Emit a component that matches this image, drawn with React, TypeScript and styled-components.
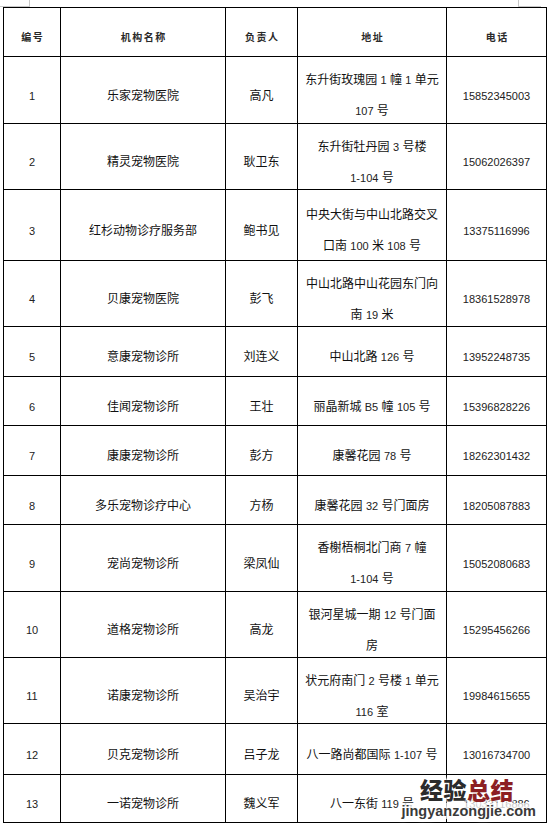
import styled, { createGlobalStyle } from "styled-components";

const GlobalStyle = createGlobalStyle`
  html, body {
    margin: 0;
    padding: 0;
    background: #fff;
  }
`;

type Row = {
  no: string;
  name: string;
  person: string;
  addr: string[];
  phone: string;
  h: number;
};

const rows: Row[] = [
  { no: "1", name: "乐家宠物医院", person: "高凡", addr: ["东升街玫瑰园 1 幢 1 单元", "107 号"], phone: "15852345003", h: 67 },
  { no: "2", name: "精灵宠物医院", person: "耿卫东", addr: ["东升街牡丹园 3 号楼", "1-104 号"], phone: "15062026397", h: 66 },
  { no: "3", name: "红杉动物诊疗服务部", person: "鲍书见", addr: ["中央大街与中山北路交叉", "口南 100 米 108 号"], phone: "13375116996", h: 71 },
  { no: "4", name: "贝康宠物医院", person: "彭飞", addr: ["中山北路中山花园东门向", "南 19 米"], phone: "18361528978", h: 66 },
  { no: "5", name: "意康宠物诊所", person: "刘连义", addr: ["中山北路 126 号"], phone: "13952248735", h: 50 },
  { no: "6", name: "佳闻宠物诊所", person: "王壮", addr: ["丽晶新城 B5 幢 105 号"], phone: "15396828226", h: 49 },
  { no: "7", name: "康康宠物诊所", person: "彭方", addr: ["康馨花园 78 号"], phone: "18262301432", h: 50 },
  { no: "8", name: "多乐宠物诊疗中心", person: "方杨", addr: ["康馨花园 32 号门面房"], phone: "18205087883", h: 49 },
  { no: "9", name: "宠尚宠物诊所", person: "梁凤仙", addr: ["香榭梧桐北门商 7 幢", "1-104 号"], phone: "15052080683", h: 67 },
  { no: "10", name: "道格宠物诊所", person: "高龙", addr: ["银河星城一期 12 号门面", "房"], phone: "15295456266", h: 66 },
  { no: "11", name: "诺康宠物诊所", person: "吴治宇", addr: ["状元府南门 2 号楼 1 单元", "116 室"], phone: "19984615655", h: 66 },
  { no: "12", name: "贝克宠物诊所", person: "吕子龙", addr: ["八一路尚都国际 1-107 号"], phone: "13016734700", h: 51 },
  { no: "13", name: "一诺宠物诊所", person: "魏义军", addr: ["八一东街 119 号"], phone: "13033116886", h: 48 },
];

const heads = ["编号", "机构名称", "负责人", "地址", "电话"];
const widths = [57, 165, 72, 149, 100];

// latin runs use a smaller, narrower size like the original document
function rich(text: string) {
  return text.split(/([A-Za-z0-9-]+)/).map((part, i) =>
    /^[A-Za-z0-9-]+$/.test(part) ? <Num key={i}>{part}</Num> : part
  );
}

function App() {
  return (
    <Page>
      <GlobalStyle />
      <Mark $side="left" />
      <Mark $side="right" />
      <Sheet>
        <colgroup>
          {widths.map((w, i) => (
            <col key={i} style={{ width: w }} />
          ))}
        </colgroup>
        <thead>
          <TableRow $h={49}>
            {heads.map((h) => (
              <HeadCell key={h}>
                <Line>{h}</Line>
              </HeadCell>
            ))}
          </TableRow>
        </thead>
        <tbody>
          {rows.map((r) => (
            <TableRow key={r.no} $h={r.h}>
              <Cell>
                <Line>
                  <Num>{r.no}</Num>
                </Line>
              </Cell>
              <Cell>
                <Line>{r.name}</Line>
              </Cell>
              <Cell>
                <Line>{r.person}</Line>
              </Cell>
              <Cell>
                {r.addr.map((line, i) => (
                  <Line key={i}>{rich(line)}</Line>
                ))}
              </Cell>
              <Cell>
                <Line>
                  <Num>{r.phone}</Num>
                </Line>
              </Cell>
            </TableRow>
          ))}
        </tbody>
      </Sheet>
      <Watermark>
        <Brand>
          经验<Red>总结</Red>
        </Brand>
        <Site>jingyanzongjie.com</Site>
      </Watermark>
    </Page>
  );
}

export default App;

const Page = styled.div`
  position: relative;
  width: 549px;
  height: 827px;
  padding: 7px 0 0 3px;
  box-sizing: border-box;
  overflow: hidden;
  background: #fff;
`;

const Mark = styled.div<{ $side: "left" | "right" }>`
  position: absolute;
  top: 0;
  height: 6px;
  border-bottom: 1px solid #c8c8c8;
  ${(p) =>
    p.$side === "left"
      ? "left: 0; width: 29px; border-right: 1px solid #c8c8c8;"
      : "left: 518px; width: 22px; border-left: 1px solid #c8c8c8;"}
`;

const Sheet = styled.table`
  width: 543px;
  table-layout: fixed;
  border-collapse: collapse;
  font-family: "Liberation Sans", "Noto Sans CJK SC", sans-serif;
  color: #111;
`;

const TableRow = styled.tr<{ $h: number }>`
  height: ${(p) => p.$h}px;
`;

const HeadCell = styled.th`
  border: 1px solid #000;
  padding: 0 0 0 1.5px;
  font-size: 10px;
  font-weight: 700;
  letter-spacing: 1.5px;
  color: #2a2a2a;
  text-align: center;
  vertical-align: middle;
`;

const Cell = styled.td`
  border: 1px solid #000;
  padding: 0 2px;
  font-size: 12px;
  text-align: center;
  vertical-align: middle;
  white-space: nowrap;
`;

// word's "exact" line spacing sits the text low in a tall line box
const Line = styled.div`
  box-sizing: border-box;
  height: 31px;
  padding-top: 11px;
  line-height: 20px;
  text-align: center;
  white-space: pre;
`;

const Num = styled.span`
  font-family: "Liberation Sans", sans-serif;
  font-size: 11px;
  color: #222;
`;

const Watermark = styled.div`
  position: absolute;
  left: 398px;
  top: 776px;
  display: flex;
  flex-direction: column;
  align-items: flex-end;
  width: 138px;
  text-shadow: 0 0 2px #fff, 0 0 3px #fff, 0 0 4px #fff, 0 0 5px #fff;
`;

const Brand = styled.div`
  font-family: "Noto Sans CJK SC", sans-serif;
  font-size: 23px;
  font-weight: 900;
  line-height: 27px;
  color: #2b2b2b;
  margin-right: 22px;
  letter-spacing: 0.5px;
`;

const Red = styled.span`
  color: #8c1f23;
`;

const Site = styled.div`
  font-family: "Liberation Sans", sans-serif;
  font-size: 14.5px;
  font-weight: 700;
  line-height: 16px;
  color: #3a3a3a;
  background: rgba(255, 255, 255, 0.7);
`;
